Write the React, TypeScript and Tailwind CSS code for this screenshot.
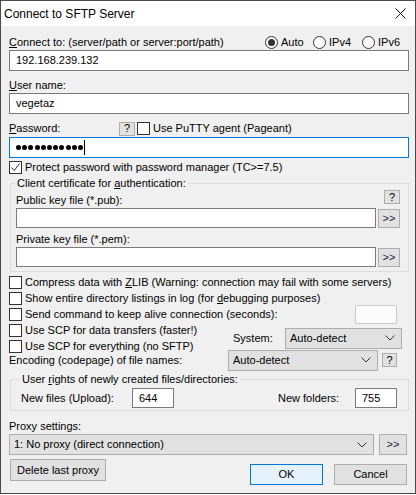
import React from "react";

const Check = ({ checked = false }: { checked?: boolean }) => (
  <span className="w-[13px] h-[13px] border border-[#333333] bg-white flex items-center justify-center shrink-0">
    {checked && (
      <svg width="11" height="11" viewBox="0 0 11 11">
        <path d="M1.5 5.5 L4.2 8.5 L9.5 1.5" fill="none" stroke="#333333" strokeWidth="1" />
      </svg>
    )}
  </span>
);

const CheckRow = ({ checked, children }: { checked?: boolean; children: React.ReactNode }) => (
  <div className="flex items-center gap-[3px] h-[16px]">
    <Check checked={checked} />
    <span className="whitespace-nowrap">{children}</span>
  </div>
);

const Radio = ({ checked = false, label, w }: { checked?: boolean; label: string; w: string }) => (
  <div className={`flex items-center gap-[3px] ${w}`}>
    <span className="w-[13px] h-[13px] rounded-full border border-[#333333] bg-white flex items-center justify-center shrink-0">
      {checked && <span className="w-[7px] h-[7px] rounded-full bg-[#333333]" />}
    </span>
    <span>{label}</span>
  </div>
);

const Btn = ({ className, children }: { className: string; children: React.ReactNode }) => (
  <div className={`bg-[#e1e1e1] border border-[#adadad] flex items-center justify-center shrink-0 ${className}`}>
    {children}
  </div>
);

const Chevron = () => (
  <svg width="10" height="6" viewBox="0 0 10 6" className="shrink-0">
    <path d="M0.5 0.5 L5 5 L9.5 0.5" fill="none" stroke="#333333" strokeWidth="1" />
  </svg>
);

const Select = ({ className, children }: { className: string; children: React.ReactNode }) => (
  <div className={`bg-[#e1e1e1] border border-[#adadad] flex items-center justify-between pl-[4px] pr-[6px] shrink-0 ${className}`}>
    <span className="whitespace-nowrap">{children}</span>
    <Chevron />
  </div>
);

const Field = ({ className, children }: { className: string; children?: React.ReactNode }) => (
  <div className={`bg-white border border-[#7a7a7a] flex items-center pl-[6px] ${className}`}>
    {children}
  </div>
);

export default function App() {
  return (
    <div className="w-[416px] h-[495px] bg-white font-['Liberation_Sans',Arial,sans-serif] text-[11px] text-black leading-none">
      <div className="w-[416px] h-[494px] border border-[#4a4a4a] bg-[#f0f0f0] flex flex-col">
        {/* title bar */}
        <div className="h-[25px] bg-white flex items-center justify-between pl-[3px] pr-[9px] shrink-0">
          <span className="text-[12px]">Connect to SFTP Server</span>
          <svg width="11" height="11" viewBox="0 0 11 11">
            <path d="M0.5 0.5 L10.5 10.5 M10.5 0.5 L0.5 10.5" stroke="#111111" strokeWidth="1" />
          </svg>
        </div>

        <div className="flex flex-col pl-[8px] pr-[6px]">
          {/* connect to */}
          <div className="flex items-center h-[16px] mt-[8px]">
            <span className="w-[256px] whitespace-nowrap">
              <u>C</u>onnect to: (server/path or server:port/path)
            </span>
            <Radio checked label="Auto" w="w-[48px]" />
            <Radio label="IPv4" w="w-[49px]" />
            <Radio label="IPv6" w="w-[40px]" />
          </div>
          <Field className="h-[21px]">192.168.239.132</Field>

          <div className="flex items-center h-[16px] mt-[6px]">
            <span>
              <u>U</u>ser name:
            </span>
          </div>
          <Field className="h-[21px]">vegetaz</Field>

          {/* password */}
          <div className="flex items-center h-[17px] mt-[6px]">
            <span className="w-[110px]">
              <u>P</u>assword:
            </span>
            <Btn className="w-[16px] h-[14px] text-[11px]">?</Btn>
            <div className="flex items-center gap-[3px] ml-[2px]">
              <Check />
              <span>Use PuTTY agent (Pageant)</span>
            </div>
          </div>
          <div className="h-[21px] bg-white border border-[#0078d7] flex items-center pl-[6px]">
            <div className="flex gap-[1.2px]">
              {Array.from({ length: 11 }).map((_, i) => (
                <span key={i} className="w-[5px] h-[5px] rounded-full bg-black" />
              ))}
            </div>
            <span className="w-[1px] h-[15px] bg-black ml-[1px]" />
          </div>

          <div className="mt-[3px]">
            <div className="flex items-center gap-[3px] h-[13px]">
              <Check checked />
              <span>Protect password with password manager (TC&gt;=7.5)</span>
            </div>
          </div>

          {/* certificate group */}
          <fieldset className="ml-[1px] mt-[1px] border border-[#dcdcdc] pl-[5px] pr-[8px] pb-[4px]">
            <legend className="px-[2px] -ml-[1px] h-[16px] leading-[16px]">
              Client certificate for <u>a</u>uthentication:
            </legend>
            <div className="flex items-start justify-between h-[18px] -mt-[1px]">
              <span className="mt-[3px] leading-[15px]">Public key file (*.pub):</span>
              <Btn className="w-[16px] h-[14px] text-[11px]">?</Btn>
            </div>
            <div className="flex items-center gap-[2px] h-[20px]">
              <Field className="flex-1 h-[20px]" />
              <Btn className="w-[22px] h-[19px] text-[11px] text-[#1a1a40]">&gt;&gt;</Btn>
            </div>
            <div className="h-[19px] pt-[4px] leading-[15px]">Private key file (*.pem):</div>
            <div className="flex items-center gap-[2px] h-[20px]">
              <Field className="flex-1 h-[20px]" />
              <Btn className="w-[22px] h-[19px] text-[11px] text-[#1a1a40]">&gt;&gt;</Btn>
            </div>
          </fieldset>

          {/* options */}
          <div className="mt-[2px] flex flex-col">
            <CheckRow>
              Compress data with <u>Z</u>LIB (Warning: connection may fail with some servers)
            </CheckRow>
            <CheckRow>
              Show entire directory listings in log (for <u>d</u>ebugging purposes)
            </CheckRow>
            <div className="flex items-center h-[16px]">
              <CheckRow>Send command to keep alive connection (seconds):</CheckRow>
              <div className="ml-auto mr-[12px] w-[42px] h-[19px] bg-[#fbfbfb] border border-[#cccccc]" />
            </div>
            <div className="flex">
              <div className="flex flex-col">
                <CheckRow>Use SCP for data transfers (faster!)</CheckRow>
                <CheckRow>Use SCP for everything (no SFTP)</CheckRow>
              </div>
              <div className="ml-auto mr-[7px] flex items-center">
                <span className="w-[52px]">System:</span>
                <Select className="w-[117px] h-[21px]">Auto-detect</Select>
              </div>
            </div>
            <div className="flex items-center h-[22px] -mt-[5px]">
              <span>Encoding (codepage) of file names:</span>
              <Select className="ml-auto w-[150px] h-[21px]">Auto-detect</Select>
              <Btn className="ml-[4px] mr-[12px] w-[15px] h-[14px] text-[11px]">?</Btn>
            </div>
          </div>

          {/* rights group */}
          <fieldset className="ml-[1px] border border-[#dcdcdc] pl-[10px] pr-[11px] pb-[2px]">
            <legend className="px-[2px] -ml-[1px] h-[16px] leading-[16px]">
              User <u>r</u>ights of newly created files/directories:
            </legend>
            <div className="flex items-center h-[20px] mt-[1px]">
              <span className="w-[111px]">New files (Upload):</span>
              <Field className="w-[42px] h-[20px]">644</Field>
              <span className="ml-auto w-[77px]">New folders:</span>
              <Field className="w-[42px] h-[20px]">755</Field>
            </div>
          </fieldset>

          {/* proxy */}
          <div className="flex items-center h-[16px] mt-[7px]">Proxy settings:</div>
          <div className="flex items-center gap-[5px] h-[21px]">
            <Select className="w-[365px] h-[21px]">1: No proxy (direct connection)</Select>
            <Btn className="w-[28px] h-[21px] text-[11px] text-[#1a1a40]">&gt;&gt;</Btn>
          </div>

          <div className="flex items-start">
            <Btn className="mt-[4px] ml-[1px] w-[96px] h-[22px]">Delete last proxy</Btn>
            <div className="ml-auto mr-[2px] mt-[9px] flex gap-[11px]">
              <div className="w-[73px] h-[21px] bg-[#e5f1fb] border border-[#0078d7] flex items-center justify-center">
                OK
              </div>
              <Btn className="w-[73px] h-[21px]">Cancel</Btn>
            </div>
          </div>
        </div>
      </div>
    </div>
  );
}
